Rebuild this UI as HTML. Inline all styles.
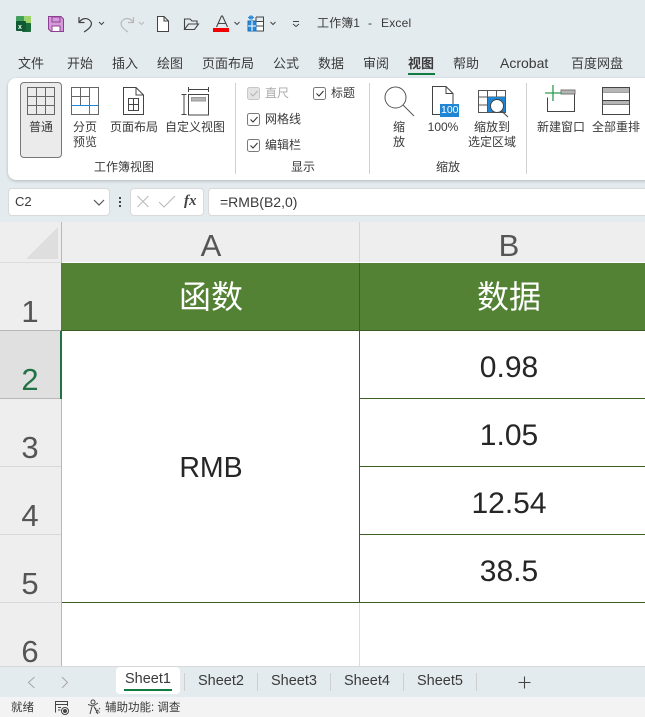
<!DOCTYPE html>
<html><head><meta charset="utf-8">
<style>
*{box-sizing:border-box}
html,body{margin:0;padding:0}
body{width:645px;height:717px;overflow:hidden;position:relative;background:#e4ebef;font-family:"Liberation Sans","Noto Sans CJK SC",sans-serif;color:#333}
.a{position:absolute}
.t{position:absolute;white-space:nowrap;line-height:1;color:#3a3a3a}
.c{text-align:center;transform:translateX(-50%)}
svg{position:absolute;overflow:visible}
.ck{position:absolute;width:13px;height:13px;border:1px solid #7a7a7a;border-radius:2.5px;background:#fff}
.hd{color:#555;font-size:31px}
.cell{color:#262626;font-size:30px}
.tab{font-size:13px;top:57px}
.st{font-size:14.500px}
</style></head><body>
<!-- QAT -->
<svg style="left:0;top:0" width="320" height="40" fill="none">
<rect x="22" y="16" width="9" height="8" fill="#9fd46a"/><rect x="16" y="16" width="8" height="8" rx="1" fill="#42a05c"/><rect x="22" y="23" width="9" height="9" rx="1" fill="#1a6b3c"/><rect x="16" y="21" width="10" height="10" rx="1" fill="#0f5a33"/>
<text x="18" y="29" font-size="7" font-weight="bold" fill="#fff" font-family="Liberation Sans">x</text>
<path d="M48.500 16.500H61L63.500 19V31.500H51L48.500 29Z" fill="#d59bd8" stroke="#8e3f93"/><rect x="52" y="17" width="8" height="5" fill="#d59bd8" stroke="#8e3f93"/><rect x="52" y="26" width="8" height="5.500" fill="#fff" stroke="#8e3f93"/>
<path d="M79 17V22.500H84.500M79.500 22C82 18 87 17.500 90 20.500C93 23.500 91.500 27.500 84 32" stroke="#444" stroke-width="1.200"/>
<path d="M99 22L101.500 24.500L104 22" stroke="#444"/>
<path d="M133.500 17V22.500H128M133 22C130.500 18 125.500 17.500 122.500 20.500C119.500 23.500 121 27.500 128 32" stroke="#b8b8b8" stroke-width="1.200"/>
<path d="M139 22L141.500 24.500L144 22" stroke="#b8b8b8"/>
<path d="M157.500 16.500H164L168.500 21V31.500H157.500Z M164 16.500V21H168.500" fill="#fff" stroke="#444"/>
<path d="M184.500 29.500V19H190L192 21H197V24M184.500 29.500H194.500L198.500 24H188.500Z" stroke="#444" stroke-width="1.100"/>
<path d="M216.500 27L221.500 16H222.500L227.500 27M218 23.500H226" stroke="#444" stroke-width="1.100"/><rect x="213" y="28" width="16" height="4" fill="#f00000"/>
<path d="M234.500 22L237 24.500L239.500 22" stroke="#444"/>
<rect x="248.500" y="21.500" width="15" height="9.500" fill="#fff" stroke="#444"/><path d="M256 17V31M248.500 26H263.500M256 21.500H263.500V17H256" stroke="#444"/><rect x="248" y="21" width="8" height="10" fill="#2b88d8" stroke="#1a6fb8"/><path d="M248 26H256M252 21V31" stroke="#fff"/><path d="M248 17.500L254 17.500M251 15V20M249 16L253 19M253 16L249 19" stroke="#2b88d8"/>
<path d="M270.500 22L273 24.500L275.500 22" stroke="#444"/>
<path d="M293 21.500H299M293 24L296 26.500L299 24" stroke="#444"/>
</svg>
<div class="t" style="left:317px;top:17px;font-size:12px;letter-spacing:.1px">工作簿1</div>
<div class="t" style="left:368px;top:17px;font-size:12px">-</div>
<div class="t" style="left:381px;top:17px;font-size:12px;letter-spacing:.2px">Excel</div>
<!-- tabs -->
<div class="t tab" style="left:18px">文件</div>
<div class="t tab" style="left:67px">开始</div>
<div class="t tab" style="left:112px">插入</div>
<div class="t tab" style="left:157px">绘图</div>
<div class="t tab" style="left:202px">页面布局</div>
<div class="t tab" style="left:273px">公式</div>
<div class="t tab" style="left:318px">数据</div>
<div class="t tab" style="left:363px">审阅</div>
<div class="t tab" style="left:408px;font-weight:bold">视图</div>
<div class="a" style="left:408px;top:73px;width:27px;height:2px;background:#107c41"></div>
<div class="t tab" style="left:453px">帮助</div>
<div class="t tab" style="left:500px;font-size:14px;top:56px">Acrobat</div>
<div class="t tab" style="left:571px">百度网盘</div>
<!-- ribbon -->
<div class="a" style="left:8px;top:78px;width:660px;height:102px;background:#fff;border-radius:8px;box-shadow:0 1px 3px rgba(0,0,0,.22)"></div>
<div class="a" style="left:20px;top:82px;width:42px;height:76px;background:#ebebeb;border:1px solid #777;border-radius:4px"></div>
<svg style="left:0;top:75px" width="645" height="110" fill="none" stroke="#444">
<path d="M27.500 12.500H54.500V39.500H27.500ZM36.500 12.500V39.500M45.500 12.500V39.500M27.500 21.500H54.500M27.500 30.500H54.500" stroke="#666"/>
<path d="M71.500 12.500H98.500V39.500H71.500ZM80.500 12.500V30M89.500 12.500V30M71.500 21.500H89.500" stroke="#666"/>
<path d="M71.500 30.500H98.500M89.500 22V39.500" stroke="#1f86d6"/>
<path d="M123.500 12.500H136L143.500 20V39.500H123.500ZM136 12.500V20H143.500M128.500 23.500H138.500V35.500H128.500ZM128.500 29.500H138.500M133.500 23.500V35.500"/>
<path d="M188.500 14.500H208.500M188.500 12V17M208.500 12V17M181.500 19.500H186.500M181.500 39.500H186.500M184 19.500V39.500"/>
<rect x="188.500" y="19.500" width="20" height="20.500"/><rect x="191.500" y="22.500" width="14" height="3.500" fill="#b5b5b5" stroke="#999"/>
<path d="M235.500 8V99M369.500 8V99M526.500 8V99" stroke="#d0d0d0"/>
<circle cx="395.500" cy="22.500" r="10.500" stroke="#555"/><path d="M403 30L414 41" stroke="#555"/>
<path d="M432.500 11.500H446L453 18.500V39.500H432.500ZM446 11.500V18.500H453"/>
<rect x="440" y="29" width="19" height="13" fill="#1f86d6" stroke="none"/>
<path d="M478.500 15.500H505.500V37.500H478.500ZM478.500 22H505.500M478.500 30H488M487.500 15.500V37.500M496.500 15.500V22" stroke="#555"/>
<rect x="488" y="22" width="17" height="15" fill="#1f86d6" stroke="none"/>
<circle cx="497" cy="31" r="6.500" fill="#fff" stroke="#444"/><path d="M501.500 36L508 42"/>
<path d="M547.500 22.500V36.500H574.500V16H561"/><rect x="561" y="15" width="14" height="4" fill="#b5b5b5" stroke="#777"/>
<path d="M553 10V26M545 18H561" stroke="#2a9d4c" stroke-width="1.300"/>
<rect x="602.500" y="12.500" width="27" height="27"/><path d="M602.500 17H629.500M602.500 25.500H629.500M602.500 29.500H629.500"/><rect x="603" y="13" width="26" height="4" fill="#b5b5b5" stroke="none"/><rect x="603" y="26" width="26" height="3.500" fill="#b5b5b5" stroke="none"/>
</svg>
<div class="t" style="left:441px;top:105px;font-size:10.500px;color:#fff">100</div>
<div class="t c" style="left:41px;top:121px;font-size:12px">普通</div>
<div class="t c" style="left:85px;top:121px;font-size:12px">分页</div>
<div class="t c" style="left:85px;top:136px;font-size:12px">预览</div>
<div class="t c" style="left:134px;top:121px;font-size:12px">页面布局</div>
<div class="t c" style="left:195px;top:121px;font-size:12px">自定义视图</div>
<div class="t c" style="left:124px;top:161px;font-size:12px">工作簿视图</div>
<div class="t c" style="left:303px;top:161px;font-size:12px">显示</div>
<div class="t c" style="left:448px;top:161px;font-size:12px">缩放</div>
<div class="ck" style="left:247px;top:87px;background:#e4e4e4;border-color:#c8c8c8"></div>
<div class="ck" style="left:313px;top:87px"></div>
<div class="ck" style="left:247px;top:113px"></div>
<div class="ck" style="left:247px;top:139px"></div>
<svg style="left:0;top:0" width="645" height="160" fill="none" stroke="#333" stroke-width="1.100">
<path d="M250.500 93.500L253 96L257.500 91" stroke="#b5b5b5"/><path d="M316.500 93.500L319 96L323.500 91"/><path d="M250.500 119.500L253 122L257.500 117"/><path d="M250.500 145.500L253 148L257.500 143"/>
</svg>
<div class="t" style="left:265px;top:87px;font-size:12px;color:#aaa">直尺</div>
<div class="t" style="left:331px;top:87px;font-size:12px">标题</div>
<div class="t" style="left:265px;top:113px;font-size:12px">网格线</div>
<div class="t" style="left:265px;top:139px;font-size:12px">编辑栏</div>
<div class="t c" style="left:399px;top:121px;font-size:12px">缩</div>
<div class="t c" style="left:399px;top:136px;font-size:12px">放</div>
<div class="t c" style="left:443px;top:121px;font-size:12px">100%</div>
<div class="t c" style="left:492px;top:121px;font-size:12px">缩放到</div>
<div class="t c" style="left:492px;top:136px;font-size:12px">选定区域</div>
<div class="t c" style="left:561px;top:121px;font-size:12px">新建窗口</div>
<div class="t c" style="left:616px;top:121px;font-size:12px">全部重排</div>
<!-- formula bar -->
<div class="a" style="left:8px;top:188px;width:102px;height:28px;background:#fff;border:1px solid #d9d9d9;border-radius:4px"></div>
<div class="t" style="left:15px;top:195px;font-size:13px">C2</div>
<div class="a" style="left:130px;top:188px;width:74px;height:28px;background:#fff;border:1px solid #d9d9d9;border-radius:4px"></div>
<div class="a" style="left:208px;top:188px;width:460px;height:28px;background:#fff;border:1px solid #d9d9d9;border-radius:4px"></div>
<svg style="left:0;top:180px" width="210" height="40" fill="none">
<path d="M94 20L99 25L104 20" stroke="#555" stroke-width="1.200"/>
<rect x="119" y="17" width="2" height="2" fill="#444"/><rect x="119" y="21" width="2" height="2" fill="#444"/><rect x="119" y="25" width="2" height="2" fill="#444"/>
<path d="M137.500 16L148.500 27M148.500 16L137.500 27" stroke="#bbb" stroke-width="1.100"/>
<path d="M159 22L164 27L175 16" stroke="#bbb" stroke-width="1.100"/>
</svg>
<div class="t" style="left:184px;top:194px;font-size:15px;font-family:'Liberation Serif',serif;font-style:italic;font-weight:bold;color:#444">fx</div>
<div class="t" style="left:220px;top:195px;font-size:14px">=RMB(B2,0)</div>
<!-- sheet -->
<div class="a" style="left:0;top:222px;width:645px;height:444px;background:#fff"></div>
<div class="a" style="left:0;top:222px;width:645px;height:40px;background:#eeeeee"></div>
<div class="a" style="left:0;top:222px;width:61px;height:444px;background:#eeeeee"></div>
<svg style="left:0;top:222px" width="62" height="40"><path d="M26 37L58 5V37Z" fill="#dedede"/></svg>
<div class="a" style="left:0;top:331px;width:61px;height:68px;background:#e0e0e0"></div>
<div class="a" style="left:61px;top:222px;width:1px;height:444px;background:#b8b8b8"></div>
<div class="a" style="left:0;top:262px;width:61px;height:1px;background:#dcdcdc"></div>
<div class="a" style="left:359px;top:222px;width:1px;height:40px;background:#d5d5d5"></div>
<div class="a" style="left:0;top:330px;width:61px;height:1px;background:#b8b8b8"></div>
<div class="a" style="left:0;top:398px;width:61px;height:1px;background:#b8b8b8"></div>
<div class="a" style="left:0;top:466px;width:61px;height:1px;background:#d8d8d8"></div>
<div class="a" style="left:0;top:534px;width:61px;height:1px;background:#d8d8d8"></div>
<div class="a" style="left:0;top:602px;width:61px;height:1px;background:#d8d8d8"></div>
<div class="a" style="left:61px;top:263px;width:584px;height:68px;background:#548235;border-bottom:1px solid #3b5e25"></div>
<div class="a" style="left:359px;top:263px;width:1px;height:68px;background:#3b5e25"></div>
<div class="a" style="left:60px;top:331px;width:2px;height:68px;background:#217346"></div>
<div class="a" style="left:359px;top:331px;width:1px;height:272px;background:#3b5e25"></div>
<div class="a" style="left:360px;top:398px;width:285px;height:1px;background:#3b5e25"></div>
<div class="a" style="left:360px;top:466px;width:285px;height:1px;background:#3b5e25"></div>
<div class="a" style="left:360px;top:534px;width:285px;height:1px;background:#3b5e25"></div>
<div class="a" style="left:62px;top:602px;width:583px;height:1px;background:#3b5e25"></div>
<div class="a" style="left:359px;top:603px;width:1px;height:63px;background:#dcdcdc"></div>
<div class="t c hd" style="left:211px;top:230px">A</div>
<div class="t c hd" style="left:509px;top:230px">B</div>
<div class="t c hd" style="left:30px;top:296px">1</div>
<div class="t c hd" style="left:30px;top:364px;color:#217346">2</div>
<div class="t c hd" style="left:30px;top:432px">3</div>
<div class="t c hd" style="left:30px;top:500px">4</div>
<div class="t c hd" style="left:30px;top:568px">5</div>
<div class="t c hd" style="left:30px;top:636px">6</div>
<div class="t c" style="left:211px;top:281px;font-size:32px;color:#fff">函数</div>
<div class="t c" style="left:509px;top:281px;font-size:32px;color:#fff">数据</div>
<div class="t c cell" style="left:211px;top:454px;font-size:28.500px">RMB</div>
<div class="t c cell" style="left:509px;top:353px">0.98</div>
<div class="t c cell" style="left:509px;top:421px">1.05</div>
<div class="t c cell" style="left:509px;top:489px">12.54</div>
<div class="t c cell" style="left:509px;top:557px">38.5</div>
<!-- sheet tabs -->
<div class="a" style="left:0;top:666px;width:645px;height:31px;background:#e4ebef;border-top:1px solid #d8d8d8"></div>
<div class="a" style="left:116px;top:667px;width:64px;height:27px;background:#fff;border-radius:4px"></div>
<div class="a" style="left:124px;top:689px;width:48px;height:2px;background:#107c41"></div>
<svg style="left:0;top:666px" width="645" height="31" fill="none">
<path d="M34.500 11L28.500 16.500L34.500 22" stroke="#aaa" stroke-width="1.100"/>
<path d="M62 11L67.500 16.500L62 22" stroke="#aaa" stroke-width="1.100"/>
<path d="M184.500 7V25M257.500 7V25M330.500 7V25M403.500 7V25M476.500 7V25" stroke="#cfcfcf"/>
<path d="M524.500 10.500V22.500M518.500 16.500H530.500" stroke="#444" stroke-width="1.100"/>
</svg>
<div class="t st" style="left:125px;top:672px">Sheet1</div>
<div class="t st" style="left:198px;top:674px">Sheet2</div>
<div class="t st" style="left:271px;top:674px">Sheet3</div>
<div class="t st" style="left:344px;top:674px">Sheet4</div>
<div class="t st" style="left:417px;top:674px">Sheet5</div>
<!-- status -->
<div class="a" style="left:0;top:697px;width:645px;height:20px;background:#f3f3f3"></div>
<div class="t" style="left:11px;top:703px;font-size:11.500px">就绪</div>
<svg style="left:0;top:697px" width="110" height="20" fill="none" stroke="#444">
<path d="M55.500 15.500V4.500H67.500V9M55.500 7.500H67.500M58 10.500H61M58 13H60.500"/><circle cx="65" cy="14" r="3.500"/><circle cx="65" cy="14" r="1.500" fill="#444"/>
<circle cx="93" cy="5" r="2"/><path d="M88 7.500L93 9L98 6M92 9.500L90 17M94 9.500L98 17"/><path d="M95 11L100 16M100 11L96 16" stroke-dasharray="1.500 1"/>
</svg>
<div class="t" style="left:105px;top:703px;font-size:11.500px">辅助功能: 调查</div>
</body></html>
